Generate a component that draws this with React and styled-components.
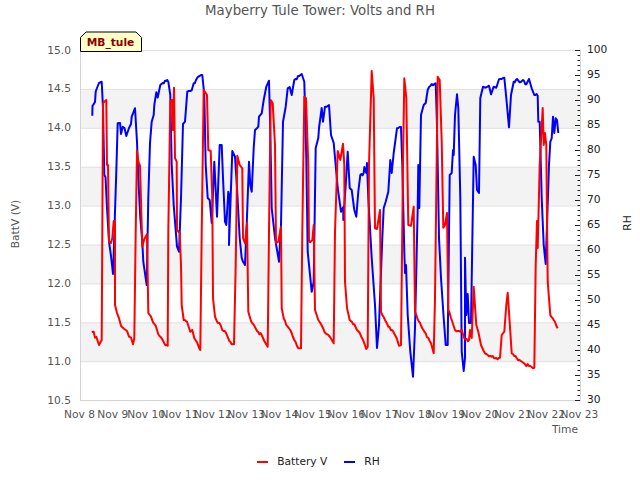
import React from "react";
import styled, { createGlobalStyle } from "styled-components";

const Global = createGlobalStyle`
  html, body { margin: 0; padding: 0; background: #fff; }
  body { font-family: "DejaVu Sans", sans-serif; }
`;

const Page = styled.div`
  position: relative;
  width: 640px;
  height: 480px;
  overflow: hidden;
  background: #fff;
  display: flex;
  flex-direction: column;
`;

const Title = styled.h1`
  margin: 0;
  height: 22px;
  line-height: 21px;
  text-align: center;
  font-size: 13.33px;
  font-weight: 400;
  color: #555;
`;

const Chart = styled.svg`
  display: block;
  width: 640px;
  height: 428px;
  font-family: "DejaVu Sans", sans-serif;
  font-size: 10.67px;
`;

const Tag = styled.div`
  position: absolute;
  left: 80px;
  top: 31px;
  width: 61px;
  height: 20px;
`;

const TagShape = styled.svg`
  position: absolute;
  inset: 0;
`;

const TagText = styled.span`
  position: relative;
  display: block;
  text-align: center;
  line-height: 23px;
  font-size: 10.67px;
  font-weight: 700;
  color: #8b0000;
`;

const Legend = styled.div`
  display: flex;
  justify-content: center;
  align-items: center;
  gap: 17px;
  height: 22px;
  padding-right: 3px;
`;

const LegendItem = styled.div`
  display: flex;
  align-items: center;
  gap: 9px;
  font-size: 10.67px;
  color: #222;
`;

const Swatch = styled.span`
  width: 11px;
  height: 2px;
  margin-top: 1px;
  background: ${(p) => p.$color};
`;

const blue = "92.3,115.7 92.5,106 95,102 95.7,91.7 97,88 99,83 101.7,81.7 103,108 104.3,175 105.5,177 107,208 109,241.7 111,256 113,274 113.5,262 115,211.7 116.3,171.7 117.7,123.3 120,123 121,134 122.7,126.7 124.5,128 126.3,136 129,128 131,124 131.7,116.7 135,108.3 137,141.7 138.3,178 140.3,218 142.3,241.7 143.3,261.7 146.7,285 148.3,198 150,143 151.7,121.7 153.7,115 154.3,105 156.3,92.3 157.7,97.5 160.3,85 165,80.7 168.3,81.7 170.3,95 171.7,165 173.7,205 177,246.7 179,251.7 181,198 183,124 185,121.7 187.3,91.7 191.7,90.3 193.7,83.3 198.3,76.7 202.3,75 204.3,95 205.7,165 207.7,198 209.7,200 211.7,223 214.3,161.7 217,216.7 219.7,145 221.7,145 223,178 225,221.7 226.3,225 228.3,191.7 229.7,198 229,245 232.3,151 235,156.7 237,188 239.7,238 241.7,258 245,265 246.7,225 249,161.7 250.3,185 251.7,191.7 253.7,148 255,130 258.3,126.7 259,116.7 261.7,113.3 263.7,100 266.3,86.7 269,80.7 270.3,131.7 271.7,208 275,238 279,261.7 281,225 283,121.7 285.7,106.7 287.7,88.3 289.7,87 291.7,95 294.3,80 301.7,74 304.3,81.7 306.3,158 307.7,251.7 311.7,291.7 313.7,281.7 315.7,148 318.3,138 319,128 321.7,108 323,121.7 325,106.7 326.7,106.7 329,105 331,135 333.7,143 337.7,188 341,211.7 343.3,207 343.3,220 345.7,185 347.7,151.7 349.7,188 351.7,190 354.3,210 356.3,216.7 358.3,191.7 360.3,175 363.7,173 364.3,167 366.3,173 367,163 368.3,198 371.7,258 375,305 377,348 379,325 382.3,238 383.7,208 385.7,201.7 388.3,191.7 390.3,160 391.7,173 393.7,153 397,128.3 401,127 402.3,165 404.3,251.7 405,273 406,265 407.7,315 410.3,351.7 413,376.7 415,328 417.7,208 418.3,165 419.3,208 421,115 423.7,105 425.7,103 427.7,90 431.7,84 435.7,83.3 437,125 439,238 441,278 443.7,318 445.7,345 447.7,345 449.7,175 451.7,173 453,150 453.7,155 455,115 457,94.3 458.3,108 460.3,198 461.7,351.7 463.7,371 465,358 465,257.7 466.3,315 467.7,294 469,323 471,323 473.7,156.7 475.7,165 477,190 479,193 480.3,98 483,86.7 485,87.7 487,87 489,85.7 491,94.3 493.7,86.7 496.3,87.7 499,79.3 504.3,77.7 506.3,98 509,127.3 511,95 513.7,81.7 517,79 519.7,82.3 523,80 526.3,84.3 529,79 531.7,88.3 534.3,95 537.7,95.7 538.3,121.7 539.7,121.7 541.7,198 543.7,245 545.7,264 547,225 549,165 550.3,141.7 551.7,138.3 553,116.7 554.3,133 555.7,118.3 557,120 558.3,133";

const red = "91.7,332 93.7,331.7 95,337.7 96.3,336.7 99,345 101.7,340 102.3,231.7 103,103 104.3,101.7 106.3,100 107,165 108,165 109,241.7 111,243 112.3,238 113.7,221 115,221.7 115,305 117,313 119,318.3 121,325.7 124.3,329 127,331 129,336.7 131,337.7 133,344.3 134.3,338.3 135.7,231.7 137,151 138.3,161.7 140,165.7 142.3,246.7 144.3,239 147,234.3 148.3,313 151,316.7 153,322.3 155.7,325.7 158.3,334.3 161.7,338.3 164.3,343.3 167.7,345.7 168.3,231.7 170.3,101 172.3,100 173,130 174,87.7 175,158 176.7,161.7 177,230 179.7,233 181,265 181.7,305 183.7,320 187,321.7 190.3,331.7 192.3,330 194.3,338.3 197,342.3 200.3,350 201.7,231.7 203.7,90 205.7,93 207,95 208.3,150 210.7,151 212.3,198 213,298 215,316.7 217,321.7 220.3,324.3 222.3,330 225.7,332.3 228.3,338.3 231.7,344.3 234,344.3 235.7,265 237.3,155.7 239.7,165 242.3,168.3 243,238 245,243.3 247,223 248.3,311.7 251,321 254.3,325.7 257,331 261.7,335 264.3,341 267.7,346.7 269,231.7 270.7,100 272.7,103.3 275,145 276,243.3 278.3,241.7 281,226.7 281.7,308.3 283.7,318.3 287.7,326.7 290.3,330 294.3,340 298.3,348.3 301,348.3 302.3,231.7 304.3,96.7 306,98.3 308.3,165 309,241.7 312.3,240 313.7,225 315,310 318.3,320 322.3,326.7 325.7,333.3 328.3,335 330,337 333.7,343.3 335,231.7 337.7,151 340.3,160 343,143.7 344.3,165 345,281.7 347,308 349.7,320 354.3,324.3 357,330 360.3,334.3 363.7,341.7 366.3,349 367.7,346.7 369,165 371.7,71 373.7,98 375,228.3 377,229 380,210 381,311.7 385,320 388.3,326.7 393.3,331.7 396.7,338.3 399,345.7 401,345 403,165 404.3,78.3 406.3,98 408.3,225 411,225.7 413.7,206.7 415,311.7 419,321.7 422.3,328.3 425.7,333.3 431,343.3 433.7,353.3 435,298 437.7,76.7 439.7,80 441.7,141.7 443.3,227.7 445,225 447,213 448.3,310 452.3,321.7 455,330 460.3,331.7 461.7,330 464.3,338.3 469,340 470,330 471.7,338 473.7,286.7 476.3,325 478.3,331.7 481,345 485,353.3 491.7,356.7 495,358.3 500,357.7 501.7,335 504.3,331.7 506.3,305 507.7,292.7 510.3,331.7 511.7,353.3 516.7,358 525,364.3 534.3,367.7 535.7,265 537,221 537.7,248 539.7,165 542.7,108 543.7,145 545,133 546.3,145 547.7,281.7 550.3,315 553.7,320 557.7,328.3";

function stepped(points) {
  const pts = points.split(" ").map((p) => p.split(",").map(Number));
  const out = [pts[0]];
  let n = 0;
  for (let i = 1; i < pts.length; i++) {
    const [x0, y0] = pts[i - 1];
    const [x1, y1] = pts[i];
    const dx = x1 - x0;
    const dy = y1 - y0;
    if (dx >= 3 && Math.abs(dy) <= dx * 3) {
      const k = Math.round(dx / 1.3);
      for (let j = 1; j < k; j++) {
        n++;
        const wobble = n % 5 === 0 ? 1.2 : n % 7 === 0 ? -1 : 0;
        const x = x0 + (dx * j) / k;
        const y = Math.round(y0 + (dy * j) / k) + wobble;
        out.push([x, y]);
      }
    }
    out.push([x1, y1]);
  }
  return out.map((p) => p.join(",")).join(" ");
}

const yLeft = ["15.0", "14.5", "14.0", "13.5", "13.0", "12.5", "12.0", "11.5", "11.0", "10.5"];
const yTop = 50.5;
const yStep = 38.9;
const days = [8, 9, 10, 11, 12, 13, 14, 15, 16, 17, 18, 19, 20, 21, 22, 23];
const minor = Array.from({ length: 71 }, (_, i) => i);
const bands = [1, 3, 5, 7];

export default function App() {
  return (
    <Page>
      <Global />
      <Title>Mayberry Tule Tower: Volts and RH</Title>
      <Chart viewBox="0 22 640 428">
        {bands.map((b) => (
          <rect key={b} x="81" y={yTop + b * yStep} width="499" height={yStep} fill="#f3f3f3" />
        ))}
        {yLeft.map((t, i) => (
          <line key={t} x1="80" x2="580" y1={yTop + i * yStep} y2={yTop + i * yStep} stroke="#e0e0e0" />
        ))}
        <line x1="80.5" x2="80.5" y1="50" y2="401" stroke="#d4d4d4" />
        <line x1="580.5" x2="580.5" y1="50" y2="401" stroke="#d4d4d4" />
        <line x1="80" x2="581" y1="400.5" y2="400.5" stroke="#d4d4d4" />
        {minor.map((i) => (
          <line key={i} x1={i % 5 === 0 ? 575 : 577.5} x2="580" y1={50.5 + i * 5} y2={50.5 + i * 5} stroke="#222" />
        ))}
        <polyline points={stepped(blue)} fill="none" stroke="#0000ff" strokeWidth="2" strokeLinejoin="round" />
        <polyline points={stepped(red)} fill="none" stroke="#ff0000" strokeWidth="2" strokeLinejoin="round" />
        {yLeft.map((t, i) => (
          <text key={t} x="71" y={53.5 + i * yStep} textAnchor="end" fill="#555">{t}</text>
        ))}
        {minor.filter((i) => i % 5 === 0).map((i) => (
          <text key={i} x="587" y={53 + i * 5} fill="#222">{100 - i}</text>
        ))}
        {days.map((d, i) => (
          <text key={d} x={79.5 + i * 33.33} y="417.5" textAnchor="middle" fill="#555">{`Nov ${d}`}</text>
        ))}
        <text x="578" y="433" textAnchor="end" fill="#555">Time</text>
        <text transform="translate(19 224) rotate(-90)" textAnchor="middle" fill="#555">BattV (V)</text>
        <text transform="translate(631 223) rotate(-90)" textAnchor="middle" fill="#222">RH</text>
      </Chart>
      <Legend>
        <LegendItem><Swatch $color="#ff0000" />Battery V</LegendItem>
        <LegendItem><Swatch $color="#0000ff" />RH</LegendItem>
      </Legend>
      <Tag>
        <TagShape width="62" height="21" viewBox="0 0 62 21">
          <path d="M.5 20.5V6.5L6 1H56L61.5 6.5V20.5Z" fill="#ffffc8" stroke="#000" />
        </TagShape>
        <TagText>MB_tule</TagText>
      </Tag>
    </Page>
  );
}
